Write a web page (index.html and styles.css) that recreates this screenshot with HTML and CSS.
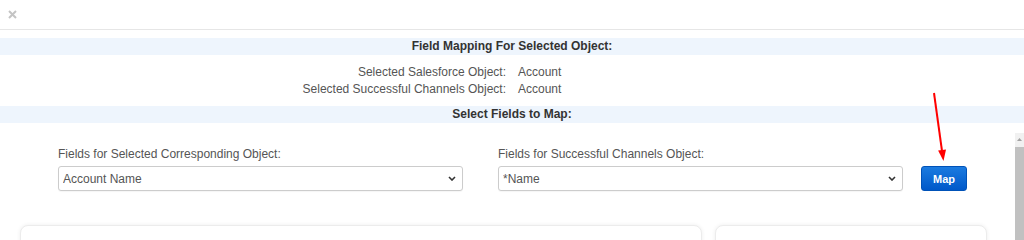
FILE: index.html
```html
<!DOCTYPE html>
<html lang="en">
<head>
    <meta charset="UTF-8">
    <meta name="viewport" content="width=device-width, initial-scale=1.0">
    <title>Field Mapping</title>
    <link rel="stylesheet" href="styles.css">
</head>
<body>
    <div class="modal">
        <div class="modal-head">
            <svg class="close-icon" width="9" height="9" viewBox="0 0 9 9">
                <path d="M1 1 L8 8 M8 1 L1 8" stroke="#c4c4c4" stroke-width="2" fill="none"/>
            </svg>
        </div>

        <div class="band">Field Mapping For Selected Object:</div>
        <div class="summary">
            <span class="summary-label">Selected Salesforce Object:</span>
            <span class="summary-value">Account</span>
            <span class="summary-label">Selected Successful Channels Object:</span>
            <span class="summary-value">Account</span>
        </div>

        <div class="band">Select Fields to Map:</div>

        <div class="scroll-area">
            <div class="scroll-content">
                <div class="map-row">
                    <div class="field-pair">
                        <div class="field">
                            <label for="sfField">Fields for Selected Corresponding Object:</label>
                            <div class="select-wrap">
                                <select id="sfField">
                                    <option>Account Name</option>
                                </select>
                                <svg class="chevron" width="8" height="5" viewBox="0 0 8 5">
                                    <path d="M1 1 L4 4 L7 1" stroke="#333" stroke-width="1.6" fill="none"/>
                                </svg>
                            </div>
                        </div>
                        <div class="field">
                            <label for="scField">Fields for Successful Channels Object:</label>
                            <div class="select-wrap">
                                <select id="scField">
                                    <option>*Name</option>
                                </select>
                                <svg class="chevron" width="8" height="5" viewBox="0 0 8 5">
                                    <path d="M1 1 L4 4 L7 1" stroke="#333" stroke-width="1.6" fill="none"/>
                                </svg>
                            </div>
                        </div>
                    </div>
                    <button class="map-btn">Map</button>
                </div>

                <div class="cards">
                    <div class="card card-wide"></div>
                    <div class="card card-narrow"></div>
                </div>
            </div>

            <div class="scrollbar">
                <div class="scrollbar-btn">
                    <svg width="9" height="13" viewBox="0 0 9 13">
                        <path d="M2 8 L4.5 5 L7 8 Z" fill="#a3a3a3"/>
                    </svg>
                </div>
                <div class="scrollbar-thumb"></div>
            </div>
        </div>

        <!-- annotation arrow pointing at the Map button -->
        <svg class="arrow" width="1024" height="240" viewBox="0 0 1024 240">
            <line x1="934" y1="93" x2="942" y2="151" stroke="#f00" stroke-width="2"/>
            <polygon points="943.5,161 946,149.6 938.1,150.6" fill="#f00"/>
        </svg>
    </div>
</body>
</html>
```

FILE: styles.css
```css
body {
    margin: 0;
    font-family: 'Liberation Sans', Arial, sans-serif;
    font-size: 12px;
    color: #333;
    background: #fff;
    overflow: hidden;
}

.modal {
    position: relative;
    width: 1024px;
}

.modal-head {
    height: 30px;
    border-bottom: 1px solid #e6e6e6;
    padding: 10px 8px 0;
    box-sizing: border-box;
}

.close-icon {
    display: block;
}

.band {
    margin-top: 8px;
    height: 17px;
    line-height: 17px;
    background-color: #eef5fd;
    text-align: center;
    font-weight: bold;
    color: #333;
}

.summary + .band {
    margin-top: 0;
}

.summary {
    display: grid;
    grid-template-columns: 1fr 1fr;
    column-gap: 12px;
    padding: 9px 0 8px;
    line-height: 17px;
    color: #555;
}

.summary-label {
    text-align: right;
}

.scroll-area {
    margin-top: 10px;
    height: 420px;
    display: flex;
    overflow: hidden;
}

.scroll-content {
    flex: 1;
    padding-top: 14px;
}

.scrollbar {
    width: 9px;
    background: #f1f1f1;
    display: flex;
    flex-direction: column;
}

.scrollbar-btn svg {
    display: block;
}

.scrollbar-btn {
    height: 13px;
}

.scrollbar-thumb {
    flex: 1;
    margin-top: 1px;
    background: #c1c1c1;
}

.map-row {
    display: flex;
    gap: 18px;
    padding-left: 58px;
}

.field-pair {
    display: flex;
    gap: 35px;
}

.field {
    width: 405px;
}

.field label {
    display: block;
    line-height: 14px;
    margin-bottom: 5px;
    color: #555;
}

.select-wrap {
    position: relative;
}

.select-wrap select {
    appearance: none;
    -webkit-appearance: none;
    width: 100%;
    height: 25px;
    border: 1px solid #ccc;
    border-radius: 3px;
    background: #fff;
    padding: 0 20px 0 4px;
    font-family: inherit;
    font-size: 12px;
    color: #555;
    box-sizing: border-box;
    box-shadow: 0 1px 1px rgba(0, 0, 0, 0.04);
}

.chevron {
    position: absolute;
    right: 7px;
    top: 10px;
    pointer-events: none;
}

.map-btn {
    align-self: flex-end;
    width: 46px;
    height: 25px;
    border: 1px solid #0052b8;
    border-radius: 3px;
    background: linear-gradient(to bottom, #1b7be0, #0058c9);
    color: #fff;
    font-family: inherit;
    font-size: 11px;
    font-weight: bold;
    padding: 0;
    cursor: pointer;
}

.cards {
    display: flex;
    gap: 13px;
    padding-left: 20px;
    margin-top: 34px;
}

.card {
    height: 200px;
    border: 1px solid #ececec;
    border-radius: 8px;
    box-shadow: 0 0 4px rgba(0, 0, 0, 0.07);
    background: #fff;
    box-sizing: border-box;
}

.card-wide {
    width: 682px;
}

.card-narrow {
    width: 272px;
}

.arrow {
    position: absolute;
    left: 0;
    top: 0;
    pointer-events: none;
}
```
